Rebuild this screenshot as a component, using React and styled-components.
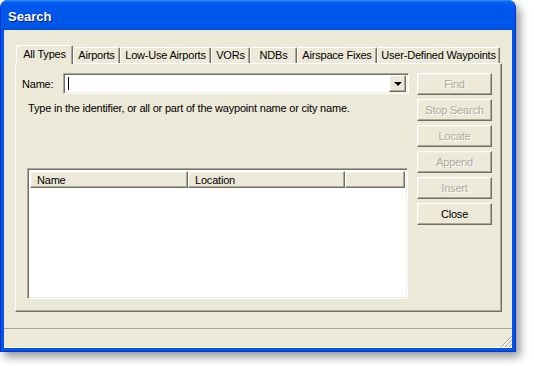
import React from "react";
import styled, { createGlobalStyle, css } from "styled-components";

const GlobalStyle = createGlobalStyle`
    html, body {
        margin: 0;
        padding: 0;
        background: #ffffff;
    }
    body {
        font-family: "Liberation Sans", Arial, sans-serif;
        font-size: 11px;
        letter-spacing: -0.2px;
        color: #000000;
    }
`;

// classic 3d edge colours
const HILITE = "#ffffff";
const LIGHT = "#f1efe2";
const SHADOW = "#aca899";
const DARK = "#716f64";
const FACE = "#ece9d8";

const raised = css`
    border-top: 1px solid ${HILITE};
    border-left: 1px solid ${HILITE};
    border-right: 1px solid ${DARK};
    border-bottom: 1px solid ${DARK};
    box-shadow: inset -1px -1px 0 ${SHADOW}, inset 1px 1px 0 ${LIGHT};
`;

const sunken = css`
    border-top: 1px solid ${SHADOW};
    border-left: 1px solid ${SHADOW};
    border-right: 1px solid ${HILITE};
    border-bottom: 1px solid ${HILITE};
    box-shadow: inset 1px 1px 0 ${DARK}, inset -1px -1px 0 ${LIGHT};
`;

const Page = styled.div`
    width: 534px;
    height: 366px;
    overflow: hidden;
`;

const Window = styled.div`
    width: 516px;
    height: 352px;
    box-sizing: border-box;
    display: flex;
    flex-direction: column;
    background: #0055e5;
    border-radius: 8px 8px 0 0;
    border: 1px solid #0831d9;
    border-top: none;
    box-shadow: 4px 5px 10px rgba(0, 0, 0, 0.42);
`;

const TitleBar = styled.div`
    height: 30px;
    flex-shrink: 0;
    box-sizing: border-box;
    padding: 2px 0 0 7px;
    display: flex;
    align-items: center;
    border-radius: 7px 7px 0 0;
    background: linear-gradient(
        to bottom,
        #3d95ff 0%,
        #0a66f0 6%,
        #0058ee 16%,
        #0055e8 55%,
        #0058ea 85%,
        #0050d8 100%
    );
`;

const Title = styled.span`
    font-family: "Liberation Sans", Arial, sans-serif;
    font-weight: bold;
    font-size: 13px;
    letter-spacing: 0;
    color: #ffffff;
    text-shadow: 1px 1px 0 #0a1883;
`;

const Client = styled.div`
    flex: 1;
    margin: 0 3px 3px 3px;
    background: ${FACE};
    display: flex;
    flex-direction: column;
`;

const Body = styled.div`
    flex: 1;
    padding: 15px 10px 16px 11px;
    display: flex;
    flex-direction: column;
`;

const TabStrip = styled.div`
    display: flex;
    align-items: flex-end;
    height: 18px;
    padding-left: 1px;
    position: relative;
    z-index: 1;
`;

const Tab = styled.div`
    width: ${(p) => p.$w}px;
    height: ${(p) => (p.$active ? 19 : 16)}px;
    box-sizing: border-box;
    margin-bottom: ${(p) => (p.$active ? -1 : 0)}px;
    background: ${FACE};
    border-top: 1px solid ${HILITE};
    border-left: 1px solid ${HILITE};
    border-right: 1px solid ${DARK};
    border-radius: 2px 2px 0 0;
    box-shadow: inset -1px 0 0 ${SHADOW};
    display: flex;
    align-items: center;
    justify-content: center;
    padding-bottom: ${(p) => (p.$active ? 3 : 1)}px;
    white-space: nowrap;
`;

const Panel = styled.div`
    flex: 1;
    box-sizing: border-box;
    border-top: 1px solid ${HILITE};
    border-left: 1px solid ${HILITE};
    border-right: 1px solid ${DARK};
    border-bottom: 1px solid ${DARK};
    box-shadow: inset -1px -1px 0 ${SHADOW};
    padding: 9px 9px 11px 6px;
    display: flex;
    gap: 8px;
`;

const Left = styled.div`
    flex: 1;
    display: flex;
    flex-direction: column;
`;

const NameRow = styled.div`
    display: flex;
    align-items: center;
    height: 21px;
`;

const Label = styled.span`
    width: 41px;
`;

const Combo = styled.div`
    flex: 1;
    height: 21px;
    box-sizing: border-box;
    ${sunken};
    background: #ffffff;
    display: flex;
    align-items: center;
    justify-content: space-between;
    padding: 2px 2px 2px 4px;
`;

const Caret = styled.span`
    width: 1px;
    height: 13px;
    background: #000000;
`;

const DropButton = styled.div`
    width: 17px;
    height: 17px;
    box-sizing: border-box;
    background: ${FACE};
    ${raised};
    display: flex;
    align-items: center;
    justify-content: center;
    &::after {
        content: "";
        border-left: 4px solid transparent;
        border-right: 4px solid transparent;
        border-top: 4px solid #000000;
        margin-top: 1px;
    }
`;

const Hint = styled.div`
    margin: 8px 0 0 6px;
    line-height: 13px;
    white-space: nowrap;
`;

const ListView = styled.div`
    margin: 53px 1px 0 5px;
    height: 131px;
    box-sizing: border-box;
    ${sunken};
    background: #ffffff;
    padding: 2px;
`;

const ListHeader = styled.div`
    display: flex;
    height: 17px;
`;

const HeaderCell = styled.div`
    box-sizing: border-box;
    ${(p) => (p.$w ? `width: ${p.$w}px;` : "flex: 1;")}
    background: ${FACE};
    ${raised};
    padding-left: 6px;
    display: flex;
    align-items: center;
`;

const Buttons = styled.div`
    width: 75px;
    display: flex;
    flex-direction: column;
    gap: 4px;
`;

const Button = styled.div`
    height: 22px;
    box-sizing: border-box;
    background: ${FACE};
    ${raised};
    display: flex;
    align-items: center;
    justify-content: center;
    color: ${(p) => (p.$disabled ? SHADOW : "#000000")};
    text-shadow: ${(p) => (p.$disabled ? `1px 1px 0 ${HILITE}` : "none")};
`;

const StatusBar = styled.div`
    height: 20px;
    box-sizing: border-box;
    border-top: 1px solid ${SHADOW};
    border-bottom: 1px solid ${HILITE};
    display: flex;
    justify-content: flex-end;
    align-items: flex-end;
`;

const Grip = () => (
    <svg width="12" height="12" viewBox="0 0 12 12">
        {[0, 4, 8].map((o) => (
            <g key={o}>
                <line x1={12} y1={o + 1} x2={o + 1} y2={12} stroke={SHADOW} strokeWidth="1" />
                <line x1={12} y1={o + 2} x2={o + 2} y2={12} stroke={HILITE} strokeWidth="1" />
            </g>
        ))}
    </svg>
);

const tabs = [
    { label: "All Types", w: 57 },
    { label: "Airports", w: 47 },
    { label: "Low-Use Airports", w: 91 },
    { label: "VORs", w: 39 },
    { label: "NDBs", w: 47 },
    { label: "Airspace Fixes", w: 80 },
    { label: "User-Defined Waypoints", w: 123 },
];

const buttons = [
    { label: "Find", disabled: true },
    { label: "Stop Search", disabled: true },
    { label: "Locate", disabled: true },
    { label: "Append", disabled: true },
    { label: "Insert", disabled: true },
    { label: "Close", disabled: false },
];

const App = () => (
    <Page>
        <GlobalStyle />
        <Window>
            <TitleBar>
                <Title>Search</Title>
            </TitleBar>
            <Client>
                <Body>
                    <TabStrip>
                        {tabs.map((t, i) => (
                            <Tab key={t.label} $w={t.w} $active={i === 0}>
                                {t.label}
                            </Tab>
                        ))}
                    </TabStrip>
                    <Panel>
                        <Left>
                            <NameRow>
                                <Label>Name:</Label>
                                <Combo>
                                    <Caret />
                                    <DropButton />
                                </Combo>
                            </NameRow>
                            <Hint>
                                Type in the identifier, or all or part of the waypoint name or city name.
                            </Hint>
                            <ListView>
                                <ListHeader>
                                    <HeaderCell $w={158}>Name</HeaderCell>
                                    <HeaderCell $w={157}>Location</HeaderCell>
                                    <HeaderCell />
                                </ListHeader>
                            </ListView>
                        </Left>
                        <Buttons>
                            {buttons.map((b) => (
                                <Button key={b.label} $disabled={b.disabled}>
                                    {b.label}
                                </Button>
                            ))}
                        </Buttons>
                    </Panel>
                </Body>
                <StatusBar>
                    <Grip />
                </StatusBar>
            </Client>
        </Window>
    </Page>
);

export default App;
